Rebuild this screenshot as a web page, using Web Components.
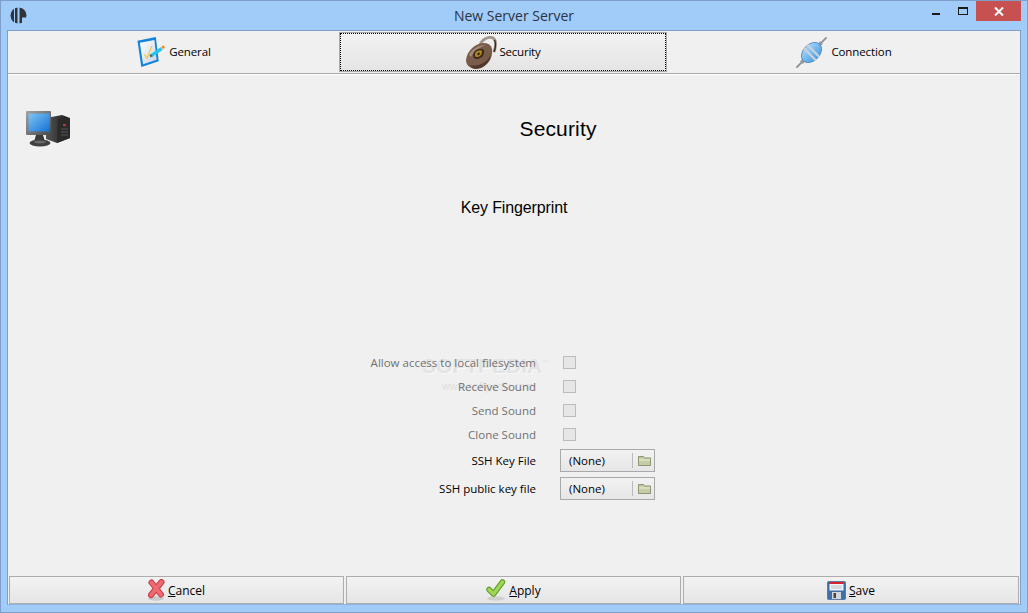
<!DOCTYPE html>
<html><head><meta charset="utf-8"><title>New Server Server</title>
<style>
html,body{margin:0;padding:0;height:100%;background:#a1cbf9}
body{font:11.5px "Open Sans","Noto Sans",sans-serif;color:#000;overflow:hidden}
</style></head><body>
<app-window>
  <title-bar slot="title" text="New Server Server"></title-bar>
  <tab-strip slot="tabs">
    <tab-button>
      <svg slot="icon" width="30" height="30" viewBox="0 0 30 31"><defs><linearGradient id="pg" x1="0" y1="0" x2="1" y2="1"><stop offset="0" stop-color="#fff"/><stop offset="1" stop-color="#c9d4e3"/></linearGradient></defs><path d="M1 4 20 0l3 25-18 6Z" fill="#1283dd"/><path d="M3.500 6 18.500 3l2.300 20.500-14 4.600Z" fill="url(#pg)"/><path d="M8 18l3 4 5-13" fill="none" stroke="#f3c84a" stroke-width="1.300"/><path d="M15 19.500l11-7.500" stroke="#25c6ee" stroke-width="3.400"/><path d="M14 20l2-1.300" stroke="#666" stroke-width="2.600"/><circle cx="27.500" cy="10.500" r="1.600" fill="#f18a2a"/></svg>
      General
    </tab-button>
    <tab-button selected>
      <svg slot="icon" width="33" height="33" viewBox="0 0 33 33"><path d="M15 9C17 3 24 0 28 2c3 2 3 8 1 14" fill="none" stroke="#a2978b" stroke-width="2.800"/><path d="M29.500 4c1.500 3 1 8-.5 12" fill="none" stroke="#33271d" stroke-width="1.300"/><path d="M1 24C2 15 10 7 19 7c7 0 9 5 8 11-1 8-7 13-15 14C6 33 1 30 1 24Z" fill="#7a5c4b"/><path d="M4 19C7 13 13 9 21 9c-6 2-12 6-15 12Z" fill="#a08a7a"/><path d="M5 29c8 2 17-2 21-11-1 9-8 15-15 15-3 0-5-1-6-4Z" fill="#513a2c"/><path d="M9 16c2-3 6-4 9-3 2 2 1 6-1 8-3 2-6 3-8 1-1-2-1-4 0-6Z" fill="#3d2c1e"/><path d="M10.500 16.500c2-2 4-2.500 6-2 1 2 0 4-1.500 5.500-2 1-3.500 1.500-4.500.5-.7-1.300-.7-2.700 0-4Z" fill="#b4881d"/><path d="M12.500 17l2-.5.500 1.500-1.500 1.500-1-.5Z" fill="#33210f"/></svg>
      Security
    </tab-button>
    <tab-button>
      <svg slot="icon" width="33" height="33" viewBox="0 0 34 34"><defs><linearGradient id="cb" x1="0" y1="0" x2="0" y2="1"><stop offset="0" stop-color="#a6d5f7"/><stop offset="1" stop-color="#4a9fe6"/></linearGradient></defs><g transform="rotate(-45 17 17)"><path d="M-5 17H39" stroke="#8b8f93" stroke-width="1.800"/><rect x="2" y="15" width="4" height="4" rx="1" fill="#9a9ea2"/><rect x="28" y="15" width="4" height="4" rx="1" fill="#9a9ea2"/><ellipse cx="17" cy="17" rx="12" ry="8.500" fill="url(#cb)" stroke="#3d7fc0" stroke-width=".8"/><path d="M14.500 8V26" stroke="#cfd2d5" stroke-width="2.200"/><path d="M19.500 8V26" stroke="#cfd2d5" stroke-width="2.200"/></g></svg>
      Connection
    </tab-button>
  </tab-strip>
  <page-body slot="body">
    <svg slot="icon" width="45" height="37" viewBox="0 0 45 37"><defs><linearGradient id="sc" x1="0" y1="0" x2="1" y2="1"><stop offset="0" stop-color="#7fc4f6"/><stop offset="1" stop-color="#1672d2"/></linearGradient><linearGradient id="tw" x1="0" y1="0" x2="1" y2="0"><stop offset="0" stop-color="#555"/><stop offset="1" stop-color="#1b1b1b"/></linearGradient><linearGradient id="fr" x1="0" y1="0" x2="1" y2="1"><stop offset="0" stop-color="#a2a2a2"/><stop offset="1" stop-color="#4a4a4a"/></linearGradient></defs><path d="M20 8 36 5l8 3v20l-13 5-11-4Z" fill="url(#tw)"/><path d="M32 8l12 0v20l-13 5Z" fill="#2a2a2a"/><rect x="37" y="14" width="3" height="2.200" fill="#b73838"/><path d="M35 19h7M35 22h7M35 25h7" stroke="#555"/><rect x="0" y="1" width="25" height="24" rx="1" fill="url(#fr)"/><rect x="2.500" y="3.500" width="21" height="18" fill="url(#sc)"/><path d="M10 25h7l1.500 5h-10Z" fill="#3a3a3a"/><ellipse cx="14" cy="33" rx="10.500" ry="3.500" fill="#3f3f3f"/><ellipse cx="14" cy="32" rx="6" ry="1.500" fill="#6a6a6a"/></svg>
    <span slot="heading">Security</span>
    <span slot="sub">Key Fingerprint</span>
    <form-grid slot="form">
      <form-check label="Allow access to local filesystem"></form-check>
      <form-check label="Receive Sound"></form-check>
      <form-check label="Send Sound"></form-check>
      <form-check label="Clone Sound"></form-check>
      <form-file label="SSH Key File"></form-file>
      <form-file label="SSH public key file"></form-file>
    </form-grid>
  </page-body>
  <action-bar slot="actions">
    <action-button key="C" rest="ancel">
      <svg slot="icon" width="17" height="22" viewBox="0 0 17 22"><ellipse cx="8" cy="19.500" rx="8" ry="2.200" fill="#bdbdbd" opacity=".7"/><g fill="none" stroke-linecap="round"><path d="M3.500 3.500 13 15.500M13.500 3 3 16" stroke="#c33d45" stroke-width="6"/><path d="M3.500 3.500 13 15.500M13.500 3 3 16" stroke="#ee6a70" stroke-width="4"/></g></svg>
    </action-button>
    <action-button key="A" rest="pply">
      <svg slot="icon" width="20" height="22" viewBox="0 0 20 22"><ellipse cx="10" cy="19.500" rx="9" ry="2" fill="#c4c4c4" opacity=".7"/><g fill="none" stroke-linecap="round" stroke-linejoin="round"><path d="M3 10.500 7.500 15 16.500 3" stroke="#5f9a2a" stroke-width="5.500"/><path d="M3 10.500 7.500 15 16.500 3" stroke="#9fd655" stroke-width="3.500"/></g></svg>
    </action-button>
    <action-button key="S" rest="ave">
      <svg slot="icon" width="19" height="19" viewBox="0 0 19 19"><rect x=".5" y=".5" width="18" height="18" rx="1" fill="#3f6fab" stroke="#5a7ca8"/><rect x="2.500" y="1" width="14" height="2" fill="#d8252c"/><rect x="2.500" y="3" width="14" height="6.500" fill="#f3f3f3"/><path d="M4 5h11M4 7h11" stroke="#b9c3d0"/><rect x="5" y="11" width="9" height="7" fill="#d4d7da"/><rect x="6.500" y="12" width="2.500" height="5" fill="#444"/></svg>
    </action-button>
  </action-bar>
</app-window>
<script>
function def(name, html){
  customElements.define(name, class extends HTMLElement{
    constructor(){super();this.attachShadow({mode:'open'}).innerHTML=html;}
    connectedCallback(){
      const r=this.shadowRoot;
      r.innerHTML=r.innerHTML.replace(/\{\{(\w+)\}\}/g,(m,a)=>this.getAttribute(a)||'');
    }
  });
}
def('app-window',`<style>
:host{display:flex;flex-direction:column;box-sizing:border-box;width:1028px;height:613px;border:1px solid #7e9fca;background:#a1cbf9}
.title{flex:none}
.inner{flex:1;min-height:0;display:flex;flex-direction:column;margin:0 6px 7px 6px;border:1px solid #7e9fca;border-bottom-color:#8fb2de;background:#f0f0f0}
.body{flex:1;min-height:0;display:flex}
</style><div class="title"><slot name="title"></slot></div><div class="inner"><slot name="tabs"></slot><div class="body"><slot name="body"></slot></div><slot name="actions"></slot></div>`);
def('title-bar',`<style>
:host{display:flex;align-items:flex-start;height:29px}
.left{width:95px;display:flex}
.logo{margin:6px 0 0 9px;width:17px;height:17px}
.t{flex:1;text-align:center;font:14px/30px "Open Sans","Noto Sans",sans-serif;color:#2b3340}
.side{display:flex;align-items:flex-start}
.min{width:8px;height:2px;background:#1a1a1a;margin:12px 18px 0 0}
.max{box-sizing:border-box;width:10px;height:8px;border:1px solid #1a1a1a;border-top-width:2px;margin:6px 8px 0 0}
.x{width:45px;height:20px;background:#c75050;margin-right:6px;display:flex;align-items:center;justify-content:center}
</style><div class="left"><svg class="logo" viewBox="0 0 17 17"><defs><clipPath id="c"><circle cx="8.500" cy="8.500" r="8"/></clipPath></defs><g clip-path="url(#c)" fill="#2f343a"><rect x="0" y="0" width="4" height="17"/><rect x="5" y="0" width="2.500" height="17"/><rect x="9.500" y="0" width="2.500" height="17"/><rect x="12" y="0" width="5" height="10.500"/></g></svg></div><div class="t">{{text}}</div><div class="side"><div class="min"></div><div class="max"></div><div class="x"><svg width="10" height="9" viewBox="0 0 10 9"><path d="M1 .5 9 8.500M9 .5 1 8.500" stroke="#fff" stroke-width="2"/></svg></div></div>`);
def('tab-strip',`<style>
:host{display:grid;grid-template-columns:331px 328px 353px;flex:none;height:43px;margin-bottom:1px;box-sizing:border-box;padding:1px 0;border-bottom:1px solid #a9a9a9;box-shadow:0 1px 0 #fff}
</style><slot></slot>`);
def('tab-button',`<style>
:host{display:flex;align-items:center;justify-content:center;gap:3px;box-sizing:border-box}
:host([selected]){border:1px solid #a9a9a9;background:linear-gradient(#f2f2f2,#e5e5e5);outline:1px dotted #000;outline-offset:-2px}
.i{display:flex}
.l{margin-bottom:2px;letter-spacing:-.1px}
:host([selected]) .l{letter-spacing:-.2px;margin-left:-2px}
</style><span class="i"><slot name="icon"></slot></span><span class="l"><slot></slot></span>`);
def('page-body',`<style>
:host{display:block;flex:1;position:relative}
.top{display:flex;height:107px}
.ic{width:88px;flex:none;box-sizing:border-box;padding:35px 0 0 18px}
.h{flex:1;text-align:center;font:21px/23px "Liberation Sans",Arial,sans-serif;letter-spacing:.15px;padding-top:42px}
.s{text-align:center;font:16px/18px "Liberation Sans",Arial,sans-serif;letter-spacing:-.12px;padding-top:17px;height:151px}
.f{display:flex;justify-content:center;padding-right:2px;position:relative;z-index:1}
.wm{position:absolute;left:414px;top:275px;font:bold 21px/26px "Liberation Sans",sans-serif;color:#e3e3e3;text-shadow:1px 1px 0 #f8f8f8;white-space:nowrap}
.wm sup{font-size:7px;font-weight:normal}
.wm2{position:absolute;left:434px;top:304px;font:10px/14px "Open Sans",sans-serif;color:#dedede;white-space:nowrap}
</style><div class="wm">SOFTPEDIA<sup>™</sup></div><div class="wm2">www.softpedia.com</div><div class="top"><div class="ic"><slot name="icon"></slot></div><div class="h"><slot name="heading"></slot></div></div><div class="s"><slot name="sub"></slot></div><div class="f"><slot name="form"></slot></div>`);
def('form-grid',`<style>:host{display:flex;flex-direction:column;align-items:stretch}</style><slot></slot>`);
def('form-check',`<style>
:host{display:grid;grid-template-columns:165px 95px;column-gap:24px;height:24px;align-items:center;color:#707070}
.l{white-space:nowrap;justify-self:end}
.c{box-sizing:border-box;width:13px;height:13px;border:1px solid #bcbcbc;background:#e6e6e6;margin-left:3px}
</style><div class="l">{{label}}</div><div class="c"></div>`);
def('form-file',`<style>
:host{display:grid;grid-template-columns:165px 95px;column-gap:24px;height:28px;align-items:center}
.l{white-space:nowrap;justify-self:end}
.b{box-sizing:border-box;height:23px;border:1px solid #a9a9a9;background:linear-gradient(#f2f2f2,#e6e6e6);display:flex;align-items:center;padding-left:8px}
.v{flex:1}
.sep{width:1px;height:15px;background:#bbb}
.ic{box-sizing:border-box;width:21px;padding-left:2px;display:flex;justify-content:center}
</style><div class="l">{{label}}</div><div class="b"><span class="v">(None)</span><span class="sep"></span><span class="ic"><svg width="13" height="11" viewBox="0 0 13 11"><path d="M.5 1.500h5l1 1.500h6v7.500H.5Z" fill="#c5cda6" stroke="#8c9470"/><path d="M1 5h11" stroke="#edf0df"/></svg></span></div>`);
def('action-bar',`<style>
:host{display:grid;grid-template-columns:335px 335px 336px;flex:none;gap:2px;height:28px;padding:0 1px}
</style><slot></slot>`);
def('action-button',`<style>
:host{display:flex;align-items:center;justify-content:center;gap:3px;box-sizing:border-box;border:1px solid #adadad;background:linear-gradient(#f2f2f2,#e5e5e5);font-size:12px}
.i{display:flex}
u{text-underline-offset:1px}
</style><span class="i"><slot name="icon"></slot></span><span><u>{{key}}</u>{{rest}}</span>`);
</script>
</body></html>
